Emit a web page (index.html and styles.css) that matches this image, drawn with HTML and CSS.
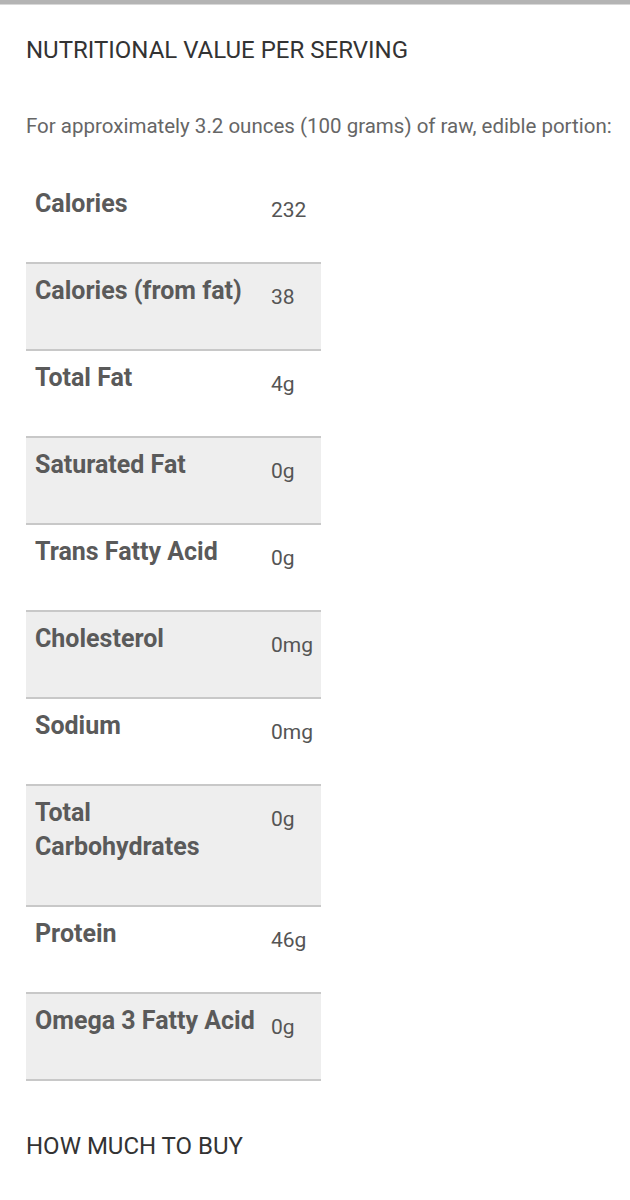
FILE: index.html
```html
<!DOCTYPE html>
<html lang="en">
<head>
<meta charset="utf-8">
<title>Nutritional value</title>
<link rel="stylesheet" href="styles.css">
</head>
<body>
<div class="topbar"></div>
<main class="content">
  <h2 class="section-title">NUTRITIONAL VALUE PER SERVING</h2>
  <p class="intro">For approximately 3.2 ounces (100 grams) of raw, edible portion:</p>
  <div class="nutri-table">
    <div class="row"><div class="label">Calories</div><div class="value">232</div></div>
    <div class="row"><div class="label">Calories (from fat)</div><div class="value">38</div></div>
    <div class="row"><div class="label">Total Fat</div><div class="value">4g</div></div>
    <div class="row"><div class="label">Saturated Fat</div><div class="value">0g</div></div>
    <div class="row"><div class="label">Trans Fatty Acid</div><div class="value">0g</div></div>
    <div class="row"><div class="label">Cholesterol</div><div class="value">0mg</div></div>
    <div class="row"><div class="label">Sodium</div><div class="value">0mg</div></div>
    <div class="row"><div class="label">Total Carbohydrates</div><div class="value">0g</div></div>
    <div class="row"><div class="label">Protein</div><div class="value">46g</div></div>
    <div class="row"><div class="label">Omega 3 Fatty Acid</div><div class="value">0g</div></div>
  </div>
  <h2 class="section-title section-title--next">HOW MUCH TO BUY</h2>
</main>
</body>
</html>
```
FILE: styles.css
```css
html, body {
  margin: 0;
  padding: 0;
  background: #ffffff;
}

body {
  font-family: Roboto, "Noto Sans", "Liberation Sans", sans-serif;
  color: #333333;
}

.topbar {
  height: 4px;
  background: #b4b4b4;
  border-bottom: 1px solid #d8d8d8;
}

.content {
  padding: 0 12px 0 26px;
}

.section-title {
  margin: 31px 0 0;
  font-size: 24px;
  line-height: 28px;
  font-weight: 400;
  color: #333333;
}

.section-title--next {
  margin-top: 51px;
}

.intro {
  margin: 50px 0 0;
  font-size: 20.5px;
  line-height: 25px;
  color: #666666;
  white-space: nowrap;
}

.nutri-table {
  margin-top: 38px;
  width: 295px;
}

.row {
  display: grid;
  grid-template-columns: 236px 1fr;
  align-items: start;
  padding-top: 10px;
  border-bottom: 2px solid #c8c8c8;
}

.row:nth-child(even) {
  background: #eeeeee;
}

.label {
  padding: 0 6px 41px 9px;
  font-size: 25px;
  line-height: 34px;
  font-weight: 700;
  color: #5a5a5a;
}

.value {
  padding: 6px 0 0 9px;
  font-size: 21px;
  line-height: 34px;
  color: #555555;
}
```
